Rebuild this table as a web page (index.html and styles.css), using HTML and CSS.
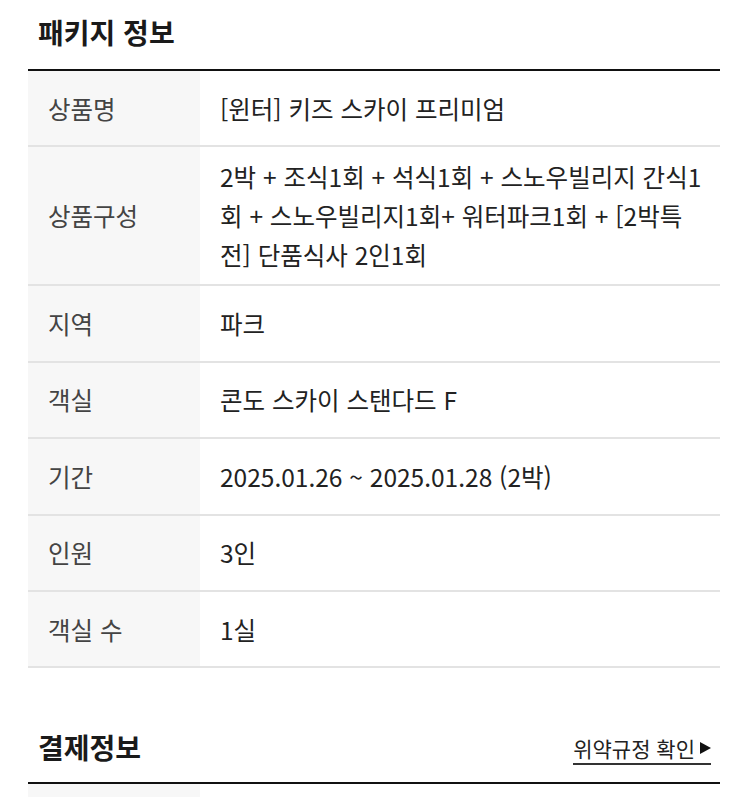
FILE: index.html
```html
<!DOCTYPE html>
<html lang="ko">
<head>
<meta charset="utf-8">
<title>패키지 정보</title>
<link rel="stylesheet" href="styles.css">
</head>
<body>
<section class="sec">
  <h2 class="sec-title">패키지 정보</h2>
  <dl class="info">
    <div class="row"><dt>상품명</dt><dd>[윈터] 키즈 스카이 프리미엄</dd></div>
    <div class="row"><dt>상품구성</dt><dd>2박 + 조식1회 + 석식1회 + 스노우빌리지 간식1회 + 스노우빌리지1회+ 워터파크1회 + [2박특전] 단품식사 2인1회</dd></div>
    <div class="row"><dt>지역</dt><dd>파크</dd></div>
    <div class="row"><dt>객실</dt><dd>콘도 스카이 스탠다드 F</dd></div>
    <div class="row"><dt>기간</dt><dd>2025.01.26 ~ 2025.01.28 (2박)</dd></div>
    <div class="row"><dt>인원</dt><dd>3인</dd></div>
    <div class="row"><dt>객실 수</dt><dd>1실</dd></div>
  </dl>
</section>
<section class="sec">
  <div class="sec-head">
    <h2 class="sec-title2">결제정보</h2>
    <a class="policy" href="#">위약규정 확인<span class="tri"></span></a>
  </div>
  <dl class="info">
    <div class="row"><dt></dt><dd></dd></div>
  </dl>
</section>
</body>
</html>
```
FILE: styles.css
```css
body {
  margin: 0;
  background: #fff;
  color: #222;
  font-family: "Noto Sans CJK KR", "Noto Sans", sans-serif;
}
.sec {
  padding: 0 30px 0 28px;
}
.sec-title {
  margin: 0;
  height: 69px;
  box-sizing: border-box;
  padding: 0 0 6px 10px;
  display: flex;
  align-items: center;
  font-size: 28px;
  font-weight: 700;
  color: #1a1a1a;
}
.info {
  margin: 0;
  border-top: 2px solid #111;
}
.row {
  display: grid;
  grid-template-columns: 172px 1fr;
  min-height: 74.4px;
  border-bottom: 2px solid #e3e3e3;
}
.row dt {
  background: #f7f7f7;
  padding-left: 20px;
  display: flex;
  align-items: center;
  font-size: 24.5px;
  color: #444;
}
.row dd {
  margin: 0;
  padding: 10px 17.5px 10px 20px;
  display: flex;
  align-items: center;
  font-size: 24.5px;
  line-height: 39px;
  color: #222;
}
.sec-head {
  height: 114px;
  box-sizing: border-box;
  padding: 44px 9px 0 10px;
  display: flex;
  justify-content: space-between;
  align-items: center;
}
.sec-title2 {
  margin: 0;
  font-size: 28px;
  font-weight: 700;
  color: #1a1a1a;
}
.policy {
  display: flex;
  align-items: center;
  font-size: 21px;
  line-height: 26px;
  color: #222;
  text-decoration: none;
  border-bottom: 2px solid #333;
  padding-bottom: 2px;
  margin-top: 6px;
}
.tri {
  width: 0;
  height: 0;
  margin-left: 5px;
  border-top: 6px solid transparent;
  border-bottom: 6px solid transparent;
  border-left: 11px solid #111;
}
```
